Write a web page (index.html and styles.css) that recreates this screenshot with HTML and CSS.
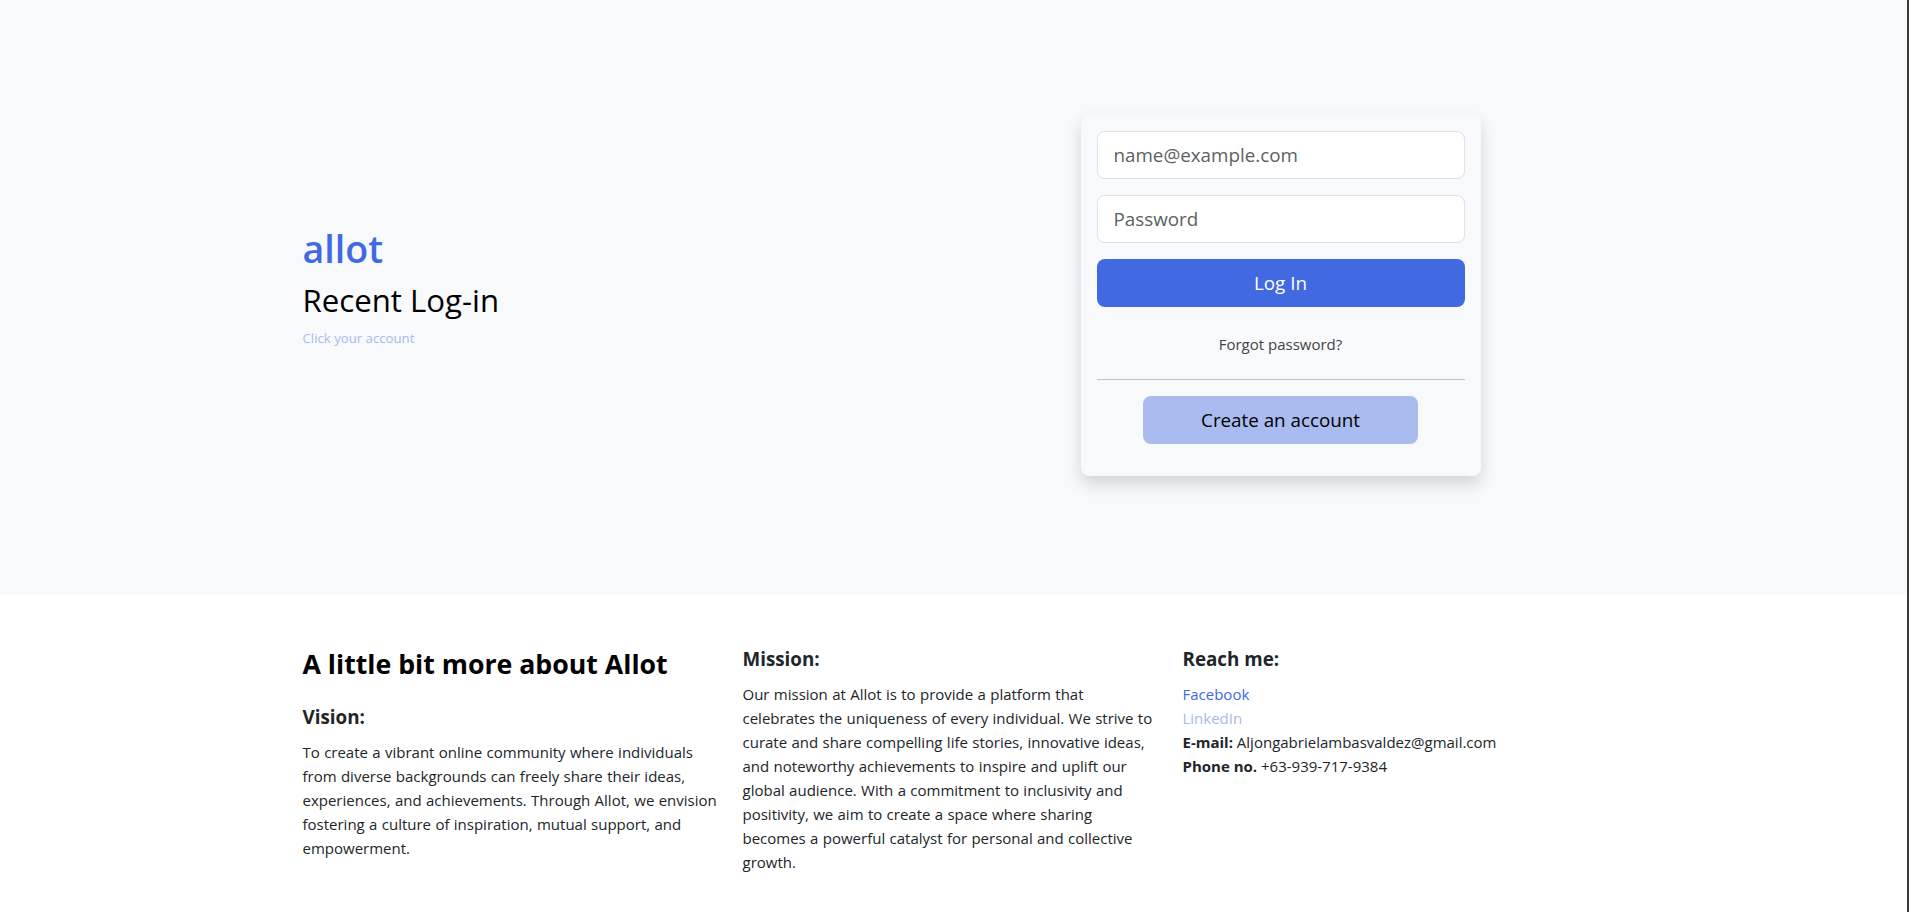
FILE: index.html
```html
<!DOCTYPE html>
<html lang="en">
<head>
<meta charset="utf-8">
<title>Allot - Log in</title>
<link rel="stylesheet" href="styles.css">
</head>
<body>
<section class="hero">
  <div class="container hero-row">
    <div class="col intro">
      <h1 class="brand">allot</h1>
      <h2 class="title">Recent Log-in</h2>
      <p class="hint">Click your account</p>
    </div>
    <div class="col">
      <form class="card">
        <input class="field" type="email" placeholder="name@example.com">
        <input class="field" type="password" placeholder="Password">
        <button class="btn btn-login" type="button">Log In</button>
        <a class="forgot" href="#">Forgot password?</a>
        <hr class="divider">
        <button class="btn btn-create" type="button">Create an account</button>
      </form>
    </div>
  </div>
</section>
<section class="about">
  <div class="container about-grid">
    <div class="col">
      <h3 class="about-title">A little bit more about Allot</h3>
      <h5 class="sub">Vision:</h5>
      <p class="text">To create a vibrant online community where individuals from diverse backgrounds can freely share their ideas, experiences, and achievements. Through Allot, we envision fostering a culture of inspiration, mutual support, and empowerment.</p>
    </div>
    <div class="col">
      <h5 class="sub">Mission:</h5>
      <p class="text">Our mission at Allot is to provide a platform that celebrates the uniqueness of every individual. We strive to curate and share compelling life stories, innovative ideas, and noteworthy achievements to inspire and uplift our global audience. With a commitment to inclusivity and positivity, we aim to create a space where sharing becomes a powerful catalyst for personal and collective growth.</p>
    </div>
    <div class="col">
      <h5 class="sub">Reach me:</h5>
      <ul class="contact">
        <li><a class="link-fb" href="#">Facebook</a></li>
        <li><a class="link-in" href="#">LinkedIn</a></li>
        <li><b>E-mail:</b> Aljongabrielambasvaldez@gmail.com</li>
        <li><b>Phone no.</b> +63-939-717-9384</li>
      </ul>
    </div>
  </div>
</section>
</body>
</html>
```

FILE: styles.css
```css
* { box-sizing: border-box; }

html, body { margin: 0; padding: 0; }

body {
  font-family: "Open Sans", "Noto Sans", sans-serif;
  font-size: 15px;
  line-height: 24px;
  color: #212529;
  background: #ffffff;
  border-right: 2px solid #3a3a3a;
  min-height: 100vh;
}

.container {
  width: 1320px;
  margin: 0 auto;
}

.col {
  padding: 0 12px;
}

/* ---------- hero ---------- */
.hero {
  background: #f8f9fa;
  height: 595px;
  padding: 115px 6px 0 0;
}

.hero-row {
  display: grid;
  grid-template-columns: 1fr 1fr;
  align-items: start;
}

.intro {
  padding-top: 110px;
}

.intro h1,
.intro h2,
.intro p { margin: 0; }

.brand {
  font-size: 37.6px;
  line-height: 48px;
  font-weight: 600;
  color: #4169e1;
  margin-bottom: 8px !important;
}

.title {
  font-size: 31.2px;
  line-height: 38.4px;
  font-weight: 500;
  color: #000;
  margin-bottom: 9px !important;
}

.hint {
  font-size: 13.2px;
  line-height: 21px;
  color: #a9b9ee;
}

.card {
  width: 400px;
  margin: 0 auto;
  background: #f8f9fa;
  border-radius: 8px;
  box-shadow: 0 8px 16px rgba(0, 0, 0, 0.15);
  padding: 16px 16px 32px;
  display: flex;
  flex-direction: column;
  align-items: center;
}

.field {
  display: block;
  width: 100%;
  height: 48px;
  padding: 8px 16px;
  font-family: inherit;
  font-size: 18.8px;
  line-height: 30px;
  color: #212529;
  background: #fff;
  border: 1px solid #dee2e6;
  border-radius: 8px;
  margin-bottom: 16px;
  outline: none;
}

.field::placeholder { color: #5b5f64; }

.btn {
  display: block;
  height: 48px;
  padding: 8px 16px;
  font-family: inherit;
  font-size: 18.8px;
  line-height: 30px;
  border: 1px solid transparent;
  border-radius: 8px;
  cursor: pointer;
}

.btn-login {
  width: 100%;
  background: #4169e1;
  color: #fff;
}

.forgot {
  display: block;
  margin: 25px 0 23px;
  font-size: 15px;
  line-height: 24px;
  color: #3f4449;
  text-decoration: none;
}

.divider {
  width: 100%;
  margin: 0 0 16px;
  border: 0;
  border-top: 1px solid #c4c5c7;
}

.btn-create {
  width: 275px;
  background: #a9bbef;
  color: #000;
}

/* ---------- about ---------- */
.about {
  padding: 52px 6px 40px 0;
}

.about-grid {
  display: grid;
  grid-template-columns: repeat(3, 1fr);
}

.about-title {
  margin: 0 0 24px;
  font-size: 26.7px;
  line-height: 33.6px;
  font-weight: 700;
  color: #000;
}

.sub {
  margin: 0 0 11px;
  font-size: 18.8px;
  line-height: 24px;
  font-weight: 700;
  color: #212529;
}

.text {
  margin: 0;
  font-size: 15px;
  line-height: 24px;
  word-spacing: 0.45px;
}

.contact {
  list-style: none;
  margin: 0;
  padding: 0;
  font-size: 15px;
  line-height: 24px;
}

.contact b { font-weight: 700; }

.link-fb { color: #4169e1; text-decoration: none; }
.link-in { color: #a9b9ee; text-decoration: none; }
```
